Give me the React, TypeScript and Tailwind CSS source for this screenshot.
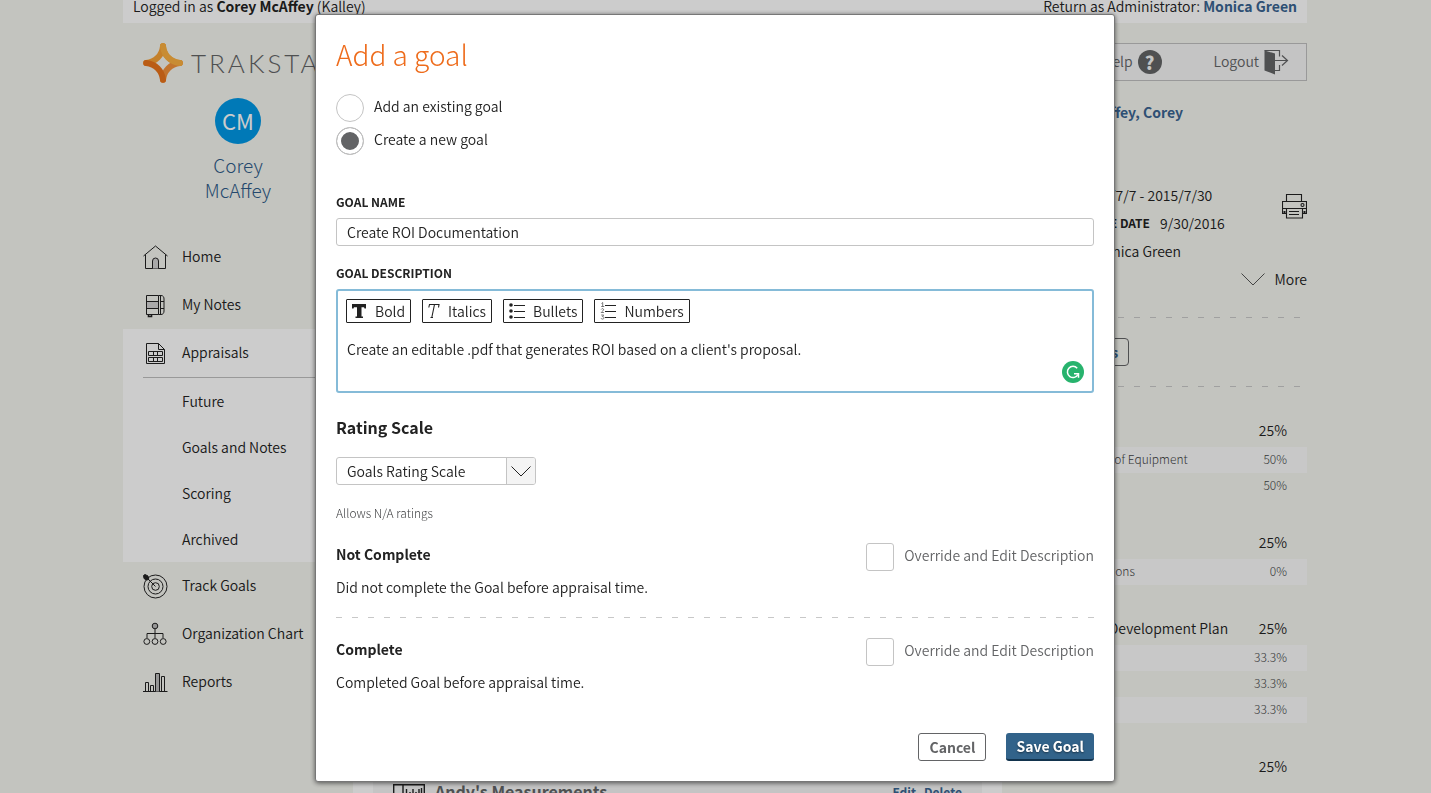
import { useState, type ReactNode } from "react";

const dashed =
  "h-px bg-[repeating-linear-gradient(90deg,#c8c8c8_0px,#c8c8c8_6px,transparent_6px,transparent_16px)]";

function StarLogo() {
  return (
    <svg width="40" height="40" viewBox="0 0 40 40" aria-hidden="true" className="shrink-0">
      <g fill="none" strokeWidth="6" strokeLinecap="round" strokeLinejoin="round">
        <path d="M20 3.200C21 12.500 27.500 19 36.800 20" stroke="#fbb040" />
        <path d="M36.800 20C27.500 21 21 27.500 20 36.800" stroke="#f3923a" />
        <path d="M3.200 20C12.500 19 19 12.500 20 3.200" stroke="#f6a035" />
        <path d="M20 36.800C19 27.500 12.500 21 3.200 20" stroke="#e9731b" />
        <path d="M20 3.200C21 12.500 27.500 19 36.800 20" stroke="#fbb040" />
      </g>
    </svg>
  );
}

function NavIcon({ children }: { children: ReactNode }) {
  return (
    <svg
      width="25"
      height="25"
      viewBox="0 0 25 25"
      fill="none"
      stroke="#222"
      strokeWidth="1"
      aria-hidden="true"
      className="shrink-0"
    >
      {children}
    </svg>
  );
}

const HomeIcon = () => (
  <NavIcon>
    <path d="M.5 11 12.500 1 24.500 11M2.500 9.500V23.500H22.500V9.500" />
    <path d="M9.500 23.500V16a3 3 0 0 1 6 0v7.500" fill="#d4d4d4" />
  </NavIcon>
);

const NotesIcon = () => (
  <NavIcon>
    <path d="M3.500 8.500h12v7h-12z" fill="#d4d4d4" stroke="none" />
    <path d="M3.500 2.500h12v19h-12zM3.500 8.500h12M3.500 15.500h12M17.500 2v20" />
    <path d="M15.500 2.500h2.500c2.500 0 3 2 3 3.500v12c0 2-1 3.500-3 3.500h-2.500M18 8.500h3M18 15.500h3" />
    <path d="M5.500 22v1.500h3V22" strokeWidth="1.600" />
  </NavIcon>
);

const AppraisalsIcon = () => (
  <NavIcon>
    <path d="M3.500 2.500h12l6 6v14h-18zM15.500 2.500v6h6" />
    <path d="M5.500 10.500h14v4h-14zM10.500 10.500v4M14.500 10.500v4M5.500 16.500h14v4h-14zM10.500 16.500v4M14.500 16.500v4" />
  </NavIcon>
);

const TargetIcon = () => (
  <NavIcon>
    <circle cx="12.500" cy="12.500" r="11.500" />
    <circle cx="12.500" cy="12.500" r="7.500" />
    <circle cx="12.500" cy="12.500" r="3.800" />
    <path d="M1 1 12.500 12.500" />
    <path d="M.5 1.500 2 .5l3 1.500.8 3.500-2.300.5L1 4.500z" fill="#222" />
  </NavIcon>
);

const OrgIcon = () => (
  <NavIcon>
    <circle cx="12" cy="4" r="2.800" fill="#bbb" />
    <path d="M12 7v9M4 16v-4.500h16V16" />
    <circle cx="3.800" cy="19.500" r="2.900" />
    <circle cx="12" cy="19.500" r="2.900" />
    <circle cx="20.200" cy="19.500" r="2.900" />
  </NavIcon>
);

const ReportsIcon = () => (
  <NavIcon>
    <path d="M0 21.500h24.500" />
    <path d="M2.500 21.500v-9h3v9M7.500 21.500v-6h3v6M18.500 21.500v-15h3v15" />
    <path d="M12.500 21.500v-18h4v18" fill="#bbb" />
  </NavIcon>
);

function LogoutIcon() {
  return (
    <svg width="25" height="25" viewBox="0 0 25 25" aria-hidden="true">
      <path d="M.5.500h15v6M15.500 15v5.500h-5M11 10.500h12M18 5.500l5.500 5-5.500 5" fill="none" stroke="#636466" strokeWidth="1.200" />
      <path d="M.5.500 11 3.500V24.500L.5 20.500z" fill="#636466" />
    </svg>
  );
}

function PrinterIcon() {
  return (
    <svg width="25" height="25" viewBox="0 0 25 25" fill="none" stroke="#222" strokeWidth="1.100" aria-hidden="true">
      <path d="M4.500 7.500v-7h15v7M.5 14.500v-7h24v7z" />
      <path d="M.5 14.500v5h4M24.500 14.500v5h-4" />
      <path d="M4.500 14.500h16v9.500h-16zM7 17.500h10M7 20.500h10" />
      <circle cx="20.500" cy="11" r="1.500" />
      <path d="M2.500 17v2M22.500 17v2" strokeWidth="2" />
    </svg>
  );
}

const MoreChevron = () => (
  <svg width="24" height="13" viewBox="0 0 24 13" aria-hidden="true">
    <path d="M.5.500 12 12 23.500.5" fill="none" stroke="#555" strokeWidth="1" />
  </svg>
);

const SelectChevron = () => (
  <svg width="20" height="11" viewBox="0 0 20 11" aria-hidden="true">
    <path d="M.5.500 10 10 19.500.5" fill="none" stroke="#222" strokeWidth="1" />
  </svg>
);

const BoldIcon = () => (
  <svg width="18" height="16" viewBox="0 0 18 16" aria-hidden="true">
    <path d="M0 1h14v4.500h-1.500L12 4.200H9.500v9.300H11V15H3.500v-1.500H5V4.200H2L1.500 5.500H0z" fill="#222" />
  </svg>
);

const ItalicIcon = () => (
  <svg width="15" height="16" viewBox="0 0 15 16" fill="none" stroke="#222" strokeWidth="1.100" aria-hidden="true">
    <path d="M.8 4.500 1.500 1.500h9.500L10.500 4.500M6.500 1.500 3.800 14.500M2.500 14.500h2.500" />
  </svg>
);

const BulletsIcon = () => (
  <svg width="19" height="16" viewBox="0 0 19 16" aria-hidden="true">
    <g fill="#222">
      <circle cx="2" cy="2" r="1.800" />
      <circle cx="2" cy="8" r="1.800" />
      <circle cx="2" cy="14" r="1.800" />
    </g>
    <path d="M5 2.500h11M5 8.500h11M5 14.500h11" stroke="#222" />
  </svg>
);

const NumbersIcon = () => (
  <svg width="19" height="18" viewBox="0 0 19 18" aria-hidden="true">
    <g fill="none" stroke="#555" strokeWidth=".8">
      <path d="M1.500 1.500 2.700.5v4M1.200 4.500h3" />
      <path d="M1.200 7.500c.5-1.300 2.500-1 2.400.2 0 .8-1.600 1.600-2.400 2.800h2.700" />
      <path d="M1.200 13h2.500L2.300 14.500c2.200-.2 2.200 2.600.2 2.600-.8 0-1.300-.4-1.500-.9" />
    </g>
    <path d="M5 3.500h11M5 9.500h11M5 15.500h11" stroke="#222" />
  </svg>
);

function GrammarIcon() {
  return (
    <svg width="22" height="22" viewBox="0 0 22 22" aria-hidden="true" className="absolute right-2 bottom-2">
      <circle cx="11" cy="11" r="11" fill="#27b36d" />
      <path d="M15.200 7.200A5.600 5.600 0 1 0 16 13.500" fill="none" stroke="#fff" strokeWidth="1.500" />
      <path d="M12 12.800h4.500v4" fill="none" stroke="#fff" strokeWidth="1.500" />
    </svg>
  );
}

const RulerIcon = () => (
  <svg width="32" height="24" viewBox="0 0 32 24" fill="none" stroke="#222" strokeWidth="1.400" aria-hidden="true">
    <path d="M.7.700h30.600v22H.7zM10 .7v22M13.500 22V5M17 22V8M20 22V5M23 22V8M26 22V5M28.500 22V4" />
  </svg>
);

function NavItem({ icon, label }: { icon: ReactNode; label: string }) {
  return (
    <a href="#" className="flex h-12 items-center gap-[14px] pl-5">
      {icon}
      <span className="pb-0.5">{label}</span>
    </a>
  );
}

function Sidebar() {
  return (
    <aside className="w-[230px] shrink-0 pt-5">
      <div className="flex h-10 items-center gap-2 pl-5 text-[#636466]">
        <StarLogo />
        <span className="font-['Lato','Noto_Sans',sans-serif] text-[26px] leading-10 font-light tracking-[3px]">
          TRAKSTAR
        </span>
      </div>
      <div className="mt-[15px] flex flex-col items-center">
        <div className="flex size-[46px] items-center justify-center rounded-full bg-[#0098e5] text-[22px] font-normal text-white">
          CM
        </div>
        <a href="#" className="mt-2 w-20 text-center text-[19px] leading-[25px] font-light text-[#2f5c8a]">
          Corey McAffey
        </a>
      </div>
      <nav className="mt-[31px]">
        <NavItem icon={<HomeIcon />} label="Home" />
        <NavItem icon={<NotesIcon />} label="My Notes" />
        <div className="bg-white">
          <NavItem icon={<AppraisalsIcon />} label="Appraisals" />
          <div className="ml-5 border-t border-[#c0c0c0]">
            {["Future", "Goals and Notes", "Scoring", "Archived"].map((s) => (
              <a key={s} href="#" className="flex h-[46px] items-center pl-[39px]">
                {s}
              </a>
            ))}
          </div>
        </div>
        <NavItem icon={<TargetIcon />} label="Track Goals" />
        <NavItem icon={<OrgIcon />} label="Organization Chart" />
        <NavItem icon={<ReportsIcon />} label="Reports" />
      </nav>
    </aside>
  );
}

const sections = [
  {
    name: "Core",
    weight: "25%",
    rows: [
      ["Maintenance of Equipment", "50%"],
      ["Quality", "50%"],
    ],
  },
  { name: "Goals", weight: "25%", rows: [["Communications", "0%"]] },
  {
    name: "Professional Development Plan",
    weight: "25%",
    rows: [
      ["Training", "33.3%"],
      ["Mentoring", "33.3%"],
      ["Reading", "33.3%"],
    ],
  },
  { name: "Questions", weight: "25%", rows: [] },
];

function Scores() {
  return (
    <table className="mt-[27px] w-full">
      {sections.map((s) => (
        <tbody key={s.name}>
          <tr className="h-[33px]">
            <td className="pb-0.5 pl-6 whitespace-nowrap">{s.name}</td>
            <td className="pr-5 pb-0.5 text-right">{s.weight}</td>
          </tr>
          {s.rows.map(([name, weight]) => (
            <tr key={name} className="h-[26px] text-xs leading-5 font-light text-[#444547] even:bg-[#fafafa]">
              <td className="pb-0.5 pl-10 whitespace-nowrap">{name}</td>
              <td className="pr-5 pb-0.5 text-right">{weight}</td>
            </tr>
          ))}
          <tr className="h-[27px]">
            <td colSpan={2} />
          </tr>
        </tbody>
      ))}
    </table>
  );
}

function Page() {
  return (
    <div className="h-full overflow-hidden bg-[#f4f5ef] pr-px">
      <div className="mx-auto max-w-[1184px]">
        <div className="flex h-[23px] justify-between bg-white px-[10px] leading-3">
          <p>
            Logged in as <b>Corey McAffey</b> (Kalley)
          </p>
          <p>
            Return as Administrator:{" "}
            <a href="#" className="font-bold text-[#3a6491]">
              Monica Green
            </a>
          </p>
        </div>
        <div className="flex">
          <Sidebar />
          <div className="min-w-0 flex-1 pt-5">
            <div className="flex h-[38px] items-center justify-end border border-[#c0c0c0] bg-[#f5f5f5] pr-[17px] text-[#636466]">
              <a href="#" className="flex items-center gap-[5px]">
                <span className="pb-0.5">Help</span>
                <span className="flex size-6 items-center justify-center rounded-full bg-[#636466] text-lg font-black text-[#f5f5f5]">
                  ?
                </span>
              </a>
              <a href="#" className="ml-[52px] flex items-center gap-[5px]">
                <span className="pb-0.5">Logout</span>
                <LogoutIcon />
              </a>
            </div>
            <div className="flex">
              <main className="flex min-w-0 flex-1 flex-col bg-white px-5 pt-[690px]">
                <article className="flex h-40 items-start gap-[10px] bg-[#f5f5f5] px-5 pt-[13px]">
                  <RulerIcon />
                  <h2 className="flex-1 text-base leading-[14px] font-bold text-[#636466]">Andy&apos;s Measurements</h2>
                  <p className="flex gap-2 text-xs font-bold text-[#3a6491]">
                    <a href="#">Edit</a>
                    <a href="#">Delete</a>
                  </p>
                </article>
              </main>
              <section className="w-[305px] shrink-0">
                <h2 className="mt-[19px] pl-20 leading-6 font-bold text-[#3a6491]">McAffey, Corey</h2>
                <div className="mt-[57px] flex items-start justify-between pl-[22px] leading-7">
                  <dl className="whitespace-nowrap">
                    <div className="flex gap-[10px]">
                      <dt className="text-xs leading-7 font-bold">PERIOD</dt>
                      <dd>2014/7/7 - 2015/7/30</dd>
                    </div>
                    <div className="flex gap-[10px]">
                      <dt className="text-xs leading-7 font-bold">APPRAISAL DUE DATE</dt>
                      <dd>9/30/2016</dd>
                    </div>
                    <div className="flex gap-[10px]">
                      <dt className="text-xs leading-7 font-bold">MANAGER</dt>
                      <dd>Monica Green</dd>
                    </div>
                  </dl>
                  <button type="button" aria-label="Print" className="mt-[13px]">
                    <PrinterIcon />
                  </button>
                </div>
                <button type="button" className="ml-auto flex h-7 items-center gap-[9px]">
                  <MoreChevron />
                  More
                </button>
                <div className={`mt-6 mr-[7px] ml-5 ${dashed}`} />
                <div className="flex py-5 pl-5">
                  <button
                    type="button"
                    className="h-7 rounded-sm border border-[#636466] px-[10px] leading-6 font-bold text-[#3a6491]"
                  >
                    Print Details
                  </button>
                </div>
                <div className={`mr-[7px] ml-5 ${dashed}`} />
                <Scores />
              </section>
            </div>
          </div>
        </div>
      </div>
    </div>
  );
}

function ToolButton({ icon, label }: { icon: ReactNode; label: string }) {
  return (
    <button type="button" className="flex h-6 items-center gap-[5px] rounded-[1px] border border-[#222] px-[5px] leading-5">
      {icon}
      {label}
    </button>
  );
}

function RatingItem({ id, title, text }: { id: string; title: string; text: string }) {
  return (
    <div className="pb-px">
      <div className="flex h-7 items-center justify-between">
        <h4 className="pb-1.5 leading-6 font-bold">{title}</h4>
        <div className="flex items-center gap-[10px]">
          <input id={id} type="checkbox" className="size-7 appearance-none rounded-[3px] border border-[#c4c4c4] bg-white checked:bg-[#636466]" />
          <label htmlFor={id} className="pb-1 leading-6 text-[#636466]">
            Override and Edit Description
          </label>
        </div>
      </div>
      <p className="mt-1 leading-6">{text}</p>
    </div>
  );
}

function GoalDialog() {
  const [mode, setMode] = useState("new");
  const radio =
    "size-7 appearance-none rounded-full border border-[#c4c4c4] checked:bg-[#636466] checked:shadow-[inset_0_0_0_4px_white]";
  return (
    <form
      role="dialog"
      aria-labelledby="dialog-title"
      onSubmit={(e) => e.preventDefault()}
      className="w-full max-w-[800px] rounded-[3px] border border-[#777] bg-white p-5 shadow-[0_1px_5px_rgba(0,0,0,0.6)]"
    >
      <h1 id="dialog-title" className="-mt-px text-[28px] leading-10 font-light text-[#ee6c1c]">
        Add a goal
      </h1>
      <div className="mt-5 flex flex-col gap-[5px]">
        <div className="flex h-7 items-center gap-[10px]">
          <input id="existing" type="radio" name="mode" checked={mode === "existing"} onChange={() => setMode("existing")} className={radio} />
          <label htmlFor="existing" className="pb-1 leading-6">Add an existing goal</label>
        </div>
        <div className="flex h-7 items-center gap-[10px]">
          <input id="new" type="radio" name="mode" checked={mode === "new"} onChange={() => setMode("new")} className={radio} />
          <label htmlFor="new" className="pb-1 leading-6">Create a new goal</label>
        </div>
      </div>
      <label htmlFor="goal-name" className="mt-[37px] block text-xs leading-5 font-bold">
        GOAL NAME
      </label>
      <input
        id="goal-name"
        defaultValue="Create ROI Documentation"
        className="mt-1.5 block h-7 w-full rounded-[3px] border border-[#c4c4c4] px-[10px] outline-none"
      />
      <label htmlFor="goal-desc" className="mt-[17px] block text-xs leading-5 font-bold">
        GOAL DESCRIPTION
      </label>
      <div className="relative mt-1.5 rounded-[3px] border-2 border-[#85bbd8] p-2">
        <div className="flex gap-[11px]">
          <ToolButton icon={<BoldIcon />} label="Bold" />
          <ToolButton icon={<ItalicIcon />} label="Italics" />
          <ToolButton icon={<BulletsIcon />} label="Bullets" />
          <ToolButton icon={<NumbersIcon />} label="Numbers" />
        </div>
        <textarea
          id="goal-desc"
          rows={2}
          defaultValue="Create an editable .pdf that generates ROI based on a client's proposal."
          className="mt-[14px] block h-[46px] w-full resize-none overflow-hidden px-px leading-6 outline-none"
        />
        <GrammarIcon />
      </div>
      <h3 className="mt-[22px] text-base leading-6 font-bold">
        <label htmlFor="scale">Rating Scale</label>
      </h3>
      <div className="relative mt-[18px] w-[200px]">
        <select id="scale" className="block h-7 w-full appearance-none rounded-[3px] border border-[#c4c4c4] bg-white px-[10px] outline-none">
          <option>Goals Rating Scale</option>
        </select>
        <span className="pointer-events-none absolute inset-y-px right-px flex w-[29px] items-center justify-center rounded-r-[2px] border-l border-[#c4c4c4] bg-[#f4f4f4]">
          <SelectChevron />
        </span>
      </div>
      <p className="mt-[18px] text-xs leading-5 font-light text-[#444547]">Allows N/A ratings</p>
      <div className="mt-5">
        <RatingItem id="override-1" title="Not Complete" text="Did not complete the Goal before appraisal time." />
        <div className={`mt-[17px] mb-5 ${dashed}`} />
        <RatingItem id="override-2" title="Complete" text="Completed Goal before appraisal time." />
      </div>
      <div className="mt-[38px] flex justify-end gap-5">
        <button type="button" className="h-7 rounded-[3px] border border-[#636466] px-[10px] leading-6 font-bold text-[#636466]">
          Cancel
        </button>
        <button
          type="submit"
          className="h-7 rounded-[3px] border-b-2 border-[#12334d] bg-[#32638a] px-[10px] leading-6 font-bold text-white [text-shadow:0_1px_2px_rgba(0,0,0,0.5)]"
        >
          Save Goal
        </button>
      </div>
    </form>
  );
}

export default function App() {
  return (
    <div className="h-screen overflow-hidden font-['Noto_Sans_CJK_SC',sans-serif] text-sm font-[350] text-[#222]">
      <Page />
      <div className="fixed inset-0 flex items-start justify-center overflow-hidden bg-black/20 pt-[14px] pr-px">
        <GoalDialog />
      </div>
    </div>
  );
}
